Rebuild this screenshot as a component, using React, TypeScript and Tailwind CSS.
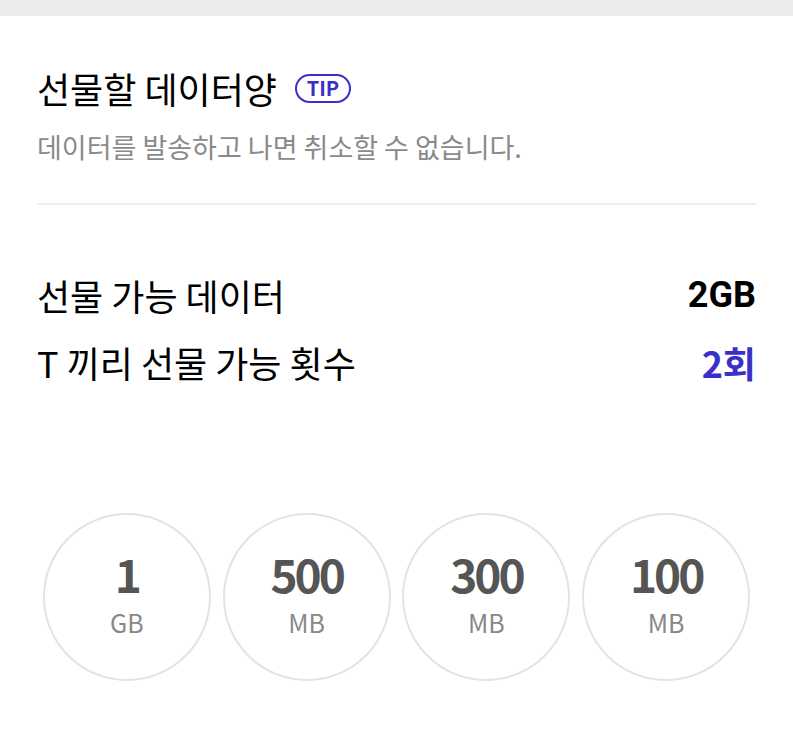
import React from "react";

const font = { fontFamily: '"Noto Sans CJK KR", "Noto Sans", sans-serif' };

const options = [
  { v: "1", u: "GB" },
  { v: "500", u: "MB" },
  { v: "300", u: "MB" },
  { v: "100", u: "MB" },
];

export default function App() {
  return (
    <div className="w-[793px] h-[750px] bg-white overflow-hidden" style={font}>
      <div className="h-4 bg-[#ebecee]" />
      <div className="px-[37px]">
        <div className="pt-[50px] flex items-center gap-[18px] h-[94px]">
          <h1 className="text-[36px] leading-[44px] text-black">선물할 데이터양</h1>
          <span className="h-[29px] w-[56px] rounded-full border-2 border-[#3b2fc9] text-[#3b2fc9] text-[20px] font-bold flex items-center justify-center leading-none">
            TIP
          </span>
        </div>
        <p className="mt-[20px] text-[27px] leading-[34px] text-[#8a8a8a]">
          데이터를 발송하고 나면 취소할 수 없습니다.
        </p>
        <div className="mt-[39px] h-[2px] bg-[#eeeeee]" />
        <div className="mt-[68px] flex items-center justify-between h-[44px]">
          <span className="text-[36px] text-black">선물 가능 데이터</span>
          <span className="text-[36px] font-bold text-black" style={{ fontFamily: 'Roboto, sans-serif' }}>2GB</span>
        </div>
        <div className="mt-[23px] flex items-center justify-between h-[44px]">
          <span className="text-[36px] text-black">T 끼리 선물 가능 횟수</span>
          <span className="text-[36px] font-bold text-[#3b2fc9]">2회</span>
        </div>
        <div className="mt-[129px] grid grid-cols-4">
          {options.map((o) => (
            <div key={o.v} className="flex justify-center">
              <div className="w-[168px] h-[168px] rounded-full border-2 border-[#e3e3e3] flex flex-col items-center justify-center pb-[10px]">
                <span className="text-[46px] leading-[46px] font-bold text-[#555555] tracking-[-3px]">{o.v}</span>
                <span className="mt-[13px] text-[25px] leading-[26px] text-[#888888]">{o.u}</span>
              </div>
            </div>
          ))}
        </div>
      </div>
    </div>
  );
}
